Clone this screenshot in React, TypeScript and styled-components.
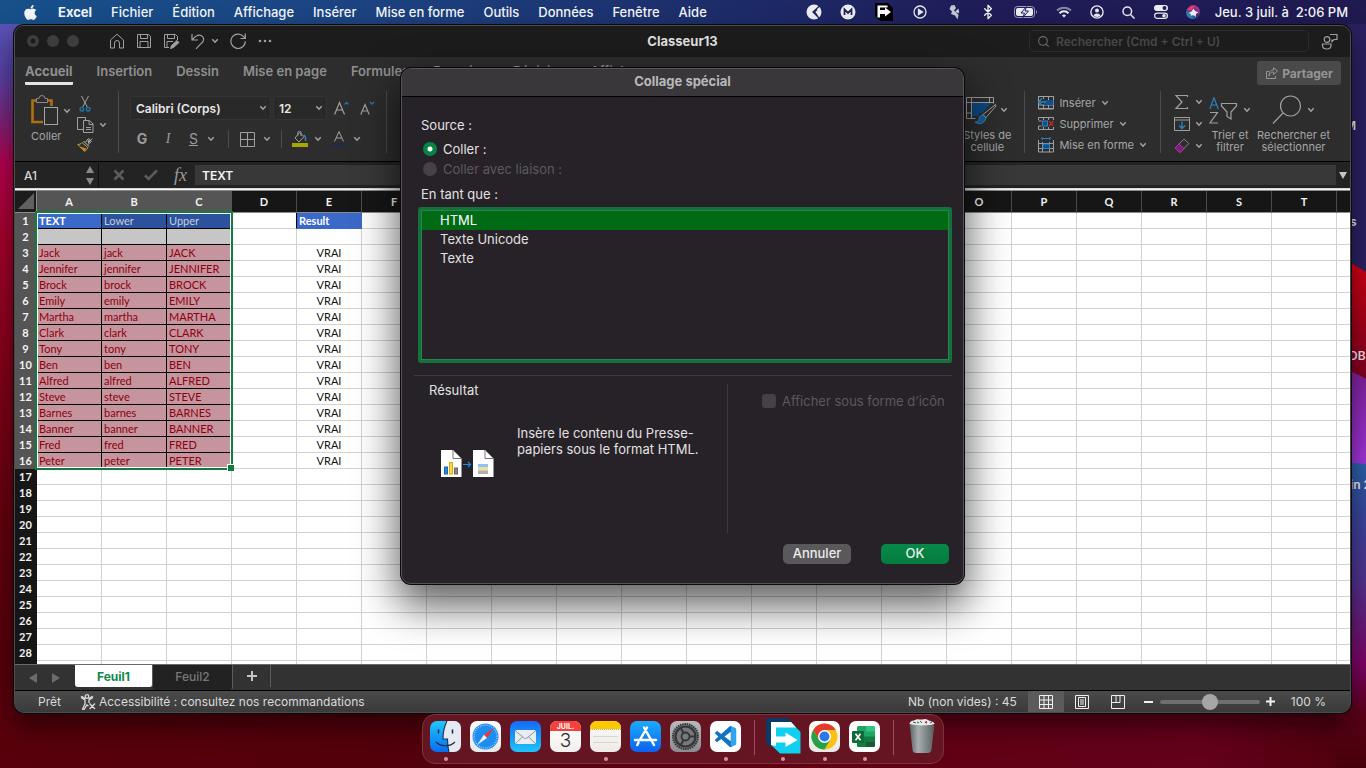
import React, { useState } from "react";
import styled, { createGlobalStyle, css } from "styled-components";
import { Bluetooth, Search } from "lucide-react";
import { FaApple } from "react-icons/fa";

const UI = `Inter, "Liberation Sans", sans-serif`;
const CELL = `Lato, "Liberation Sans", sans-serif`;

const Global = createGlobalStyle`
  * { box-sizing: border-box; }
  body { margin: 0; font-family: ${UI}; font-size: 13px; overflow: hidden; }
  button, input, select { font-family: inherit; font-size: inherit; color: inherit; margin: 0; }
  button { background: none; border: 0; padding: 0; }
  svg { display: block; flex: none; }
`;

/* ---------- desktop ---------- */

const Desktop = styled.div`
  position: relative;
  height: 100vh;
  display: flex;
  flex-direction: column;
  overflow: hidden;
  background:
    linear-gradient(to bottom, #5a52b4 24px, #5443a6 70px, #7a2378 120px, #b4004c 165px, #a3002c 240px, #84001a 360px, #62000e 520px, #56000a 650px, transparent 700px) left / 30px 100% no-repeat,
    linear-gradient(to right, #58000b, #52000b 30%, #600012 60%, #64001a 88%, #4c000c);
`;

const Wallpaper = styled.svg`
  position: absolute;
  top: 0;
  right: 0;
  width: 30px;
  height: 768px;
`;

const DesktopLabel = styled.span<{ $top: number; $inset?: number }>`
  position: absolute;
  top: ${(p) => p.$top}px;
  left: calc(100% - ${(p) => p.$inset ?? 16}px);
  color: #e6e6ee;
  font-size: 12px;
  font-weight: 600;
  line-height: 16px;
  white-space: nowrap;
`;

const MenuBar = styled.header`
  position: relative;
  flex: none;
  height: 24px;
  display: flex;
  align-items: center;
  justify-content: space-between;
  padding: 0 18px 0 22px;
  color: #f4f6fa;
  font-weight: 500;
  background: linear-gradient(to right, #17508a, #1c4482 25%, #1c2f6c 50%, #1f1c58 72%, #1f1a50);
`;

const MenuGroup = styled.nav`
  display: flex;
  align-items: center;
  gap: 19px;
`;

const MenuLink = styled.a<{ $strong?: boolean }>`
  color: inherit;
  text-decoration: none;
  font-weight: ${(p) => (p.$strong ? 700 : 500)};
  line-height: 24px;
`;

const TrayGroup = styled.div<{ $gap: number }>`
  display: flex;
  align-items: center;
  gap: ${(p) => p.$gap}px;
`;

const TrayIcon = styled.span<{ $w: number }>`
  width: ${(p) => p.$w}px;
  display: flex;
  justify-content: center;
`;

const Clock = styled.time`
  white-space: pre;
`;

/* ---------- window ---------- */

const Window = styled.main`
  position: relative;
  flex: 1;
  min-height: 0;
  margin: 1px 15px 0 14px;
  display: flex;
  flex-direction: column;
  overflow: hidden;
  border: 1px solid #4c4c4c;
  border-radius: 10px;
  background: #2d2d2d;
  box-shadow: 0 0 0 1px #0c0a0c, 0 12px 26px rgba(0, 0, 0, 0.5);
  color: #9b9b9b;
`;

const TitleBar = styled.div`
  flex: none;
  height: 31px;
  display: grid;
  grid-template-columns: 1fr auto 1fr;
  align-items: center;
  padding-bottom: 1px;
  background: #1c1c1c;
`;

const TitleSide = styled.div<{ $end?: boolean }>`
  display: flex;
  align-items: center;
  ${(p) =>
    p.$end
      ? css`justify-content: flex-end; gap: 12px; padding-right: 13px;`
      : css`gap: 11px; padding-left: 12px;`}
`;

const Lights = styled.div`
  display: flex;
  gap: 8px;
  margin-right: 19px;
`;

const Light = styled.button<{ $dot?: boolean }>`
  width: 12px;
  height: 12px;
  border-radius: 50%;
  background: ${(p) => (p.$dot ? "radial-gradient(circle, #1c1c1c 2px, #3d3d3d 3px)" : "#3d3d3d")};
`;

const IconButton = styled.button<{ $w?: number }>`
  width: ${(p) => p.$w ?? 16}px;
  display: flex;
  justify-content: center;
  align-items: center;
  color: #9b9b9b;
`;

const DocTitle = styled.h1`
  margin: 0;
  font-size: 13px;
  font-weight: 700;
  color: #dedede;
`;

const SearchBox = styled.label`
  width: 280px;
  height: 22px;
  display: flex;
  align-items: center;
  gap: 6px;
  padding: 0 7px;
  border: 1px solid #2b2b2b;
  border-radius: 5px;
  color: #6c6c6c;
  input {
    flex: 1;
    min-width: 0;
    border: 0;
    outline: 0;
    padding: 0;
    background: none;
    font-size: 12px;
    font-weight: 600;
  }
  input::placeholder { color: #474747; opacity: 1; }
`;

const TabRow = styled.div`
  flex: none;
  height: 30px;
  display: flex;
  justify-content: space-between;
  align-items: flex-start;
  padding: 4px 9px 0 10px;
`;

const Tabs = styled.div`
  display: flex;
  gap: 24px;
`;

const RibbonTab = styled.button<{ $on?: boolean }>`
  height: 24px;
  padding: 0 0 2px;
  border-bottom: 3px solid ${(p) => (p.$on ? "#e4e4e4" : "transparent")};
  border-radius: 1px;
  font-weight: ${(p) => (p.$on ? 700 : 600)};
  color: #8f8f8f;
`;

const ShareButton = styled.button`
  height: 24px;
  width: 84px;
  display: flex;
  align-items: center;
  justify-content: center;
  gap: 4px;
  border-radius: 3px;
  background: #4a4a4a;
  font-size: 12px;
  font-weight: 700;
  color: #959595;
`;

const Ribbon = styled.div`
  flex: none;
  height: 75px;
  display: flex;
  justify-content: space-between;
  padding: 4px 20px 0 16px;
  border-bottom: 1px solid #000;
`;

const Group = styled.div<{ $gap: number }>`
  height: 62px;
  display: flex;
  gap: ${(p) => p.$gap}px;
`;

const Column = styled.div<{ $gap?: number; $top?: number }>`
  display: flex;
  flex-direction: column;
  justify-content: center;
  align-items: flex-start;
  gap: ${(p) => p.$gap ?? 6}px;
  padding-top: ${(p) => p.$top ?? 0}px;
`;

const Row = styled.div<{ $gap?: number }>`
  display: flex;
  align-items: center;
  gap: ${(p) => p.$gap ?? 5}px;
`;

const Separator = styled.span<{ $h?: number }>`
  width: 1px;
  height: ${(p) => p.$h ?? 62}px;
  background: #4b4b4b;
`;

const BigTool = styled.button<{ $start?: boolean }>`
  display: flex;
  flex-direction: column;
  align-items: ${(p) => (p.$start ? "flex-start" : "center")};
  justify-content: flex-start;
  gap: 4px;
  padding-top: 4px;
  font-size: 11px;
  font-weight: 400;
  line-height: 12px;
  white-space: pre-line;
  color: #a6a6a6;
  > div { height: 31px; }
`;

const SmallTool = styled.button`
  height: 16px;
  display: flex;
  align-items: center;
  gap: 5px;
  font-size: 11px;
  font-weight: 400;
  color: #a6a6a6;
`;

const Combo = styled.span<{ $w: number }>`
  width: ${(p) => p.$w}px;
  height: 24px;
  display: flex;
  align-items: center;
  padding-right: 3px;
  border: 1px solid #353535;
  border-radius: 3px;
  background: #292929;
  color: #e6e6e6;
  select {
    flex: 1;
    min-width: 0;
    appearance: none;
    border: 0;
    outline: 0;
    padding: 0 0 0 5px;
    background: none;
    font-size: 12px;
    font-weight: 600;
  }
`;

const Letter = styled.span<{ $italic?: boolean; $line?: boolean; $bold?: boolean; $size?: number }>`
  font-family: ${(p) => (p.$italic ? `"Liberation Serif", serif` : UI)};
  font-size: ${(p) => p.$size ?? 14}px;
  line-height: 16px;
  font-style: ${(p) => (p.$italic ? "italic" : "normal")};
  font-weight: ${(p) => (p.$bold ? 700 : 400)};
  text-decoration: ${(p) => (p.$line ? "underline" : "none")};
`;

/* ---------- formula bar ---------- */

const FormulaBar = styled.div`
  flex: none;
  height: 26px;
  display: flex;
  align-items: center;
  background: #232323;
`;

const NameBox = styled.div`
  width: 84px;
  height: 26px;
  display: flex;
  align-items: center;
  justify-content: space-between;
  padding: 0 4px 0 9px;
  border-right: 1px solid #111;
  input {
    width: 50px;
    border: 0;
    outline: 0;
    padding: 0;
    background: none;
    font-size: 12px;
    font-weight: 500;
    color: #d8d8d8;
  }
`;

const FormulaTools = styled.div`
  width: 96px;
  display: flex;
  align-items: center;
  justify-content: space-between;
  padding: 0 8px 0 12px;
`;

const FormulaInput = styled.input`
  flex: 1;
  min-width: 0;
  height: 20px;
  border: 0;
  outline: 0;
  padding: 0 7px;
  background: #383838;
  font-size: 12px;
  font-weight: 600;
  color: #f5f5f5;
`;

const Expand = styled.button`
  width: 14px;
  display: flex;
  justify-content: center;
`;

const Rule = styled.div`
  flex: none;
  height: 3px;
  background: linear-gradient(to bottom, #d8d8d8 1px, #f4f4f4 1px, #f4f4f4 2px, #8a8a8a 2px);
`;

/* ---------- sheet ---------- */

const Sheet = styled.section`
  position: relative;
  flex: 1;
  min-height: 0;
  overflow: hidden;
  background: #fff;
`;

const Grid = styled.table`
  width: 1387px;
  table-layout: fixed;
  border-collapse: separate;
  border-spacing: 0;
  font-family: ${CELL};
  font-size: 11px;
  color: #111;
`;

const ColHead = styled.th<{ $on: boolean }>`
  height: 22px;
  padding: 0;
  border-right: 1px solid ${(p) => (p.$on ? "#555" : "#4a4a4a")};
  border-bottom: 1px solid #8c8c8c;
  background: ${(p) => (p.$on ? "#555" : "#161616")};
  color: #f2f2f2;
  font-weight: 700;
`;

const Corner = styled.td`
  padding: 0 2px 1px 0;
  border-bottom: 1px solid #8c8c8c;
  border-right: 1px solid #8c8c8c;
  background: #1c1c1c;
  svg { margin-left: auto; }
`;

const RowHead = styled.th<{ $on: boolean }>`
  height: 16px;
  padding: 0 1px 0 0;
  background: ${(p) => (p.$on ? "#555" : "#161616")};
  color: #f2f2f2;
  line-height: 15px;
  font-weight: 700;
  vertical-align: top;
`;

type Kind = "plain" | "active" | "head" | "blank" | "red" | "result" | "true" | "edge";

const kinds: Record<Kind, ReturnType<typeof css>> = {
  plain: css``,
  edge: css`border-right-color: #000;`,
  active: css`background: #3b69ca; color: #fff; font-weight: 700; border-color: #000;`,
  head: css`background: #2c529e; color: #c9cdd6; border-color: #000;`,
  blank: css`background: #c6c6c6; border-color: #000;`,
  red: css`background: #c6949c; color: #8e0010; border-color: #000;`,
  result: css`background: #3b69ca; color: #fff; font-weight: 700; border-color: #3b69ca;`,
  true: css`text-align: center;`,
};

const Cell = styled.td<{ $kind: Kind }>`
  height: 16px;
  padding: 0 2px;
  border: 0 solid #d2d2d2;
  border-width: 0 1px 1px 0;
  line-height: 15px;
  white-space: nowrap;
  ${(p) => kinds[p.$kind]}
`;

const Selection = styled.div`
  position: absolute;
  top: 20px;
  left: 20px;
  width: 198px;
  height: 259px;
  border: 2px solid #107c41;
  box-shadow: inset 0 0 0 1px #fff;
  pointer-events: none;
  &::after {
    content: "";
    position: absolute;
    right: -3px;
    bottom: -3px;
    width: 6px;
    height: 6px;
    background: #107c41;
    border: 0 solid #fff;
    border-width: 1px 0 0 1px;
  }
`;

const SheetTabs = styled.div`
  flex: none;
  height: 27px;
  display: flex;
  align-items: flex-start;
  border-top: 1px solid #6a6a6a;
  border-bottom: 1px solid #000;
  background: #323232;
`;

const TabArrows = styled.div`
  width: 60px;
  height: 26px;
  display: flex;
  align-items: center;
  gap: 15px;
  padding-left: 14px;
`;

const SheetTab = styled.button<{ $on?: boolean }>`
  width: ${(p) => (p.$on ? 78 : 80)}px;
  height: ${(p) => (p.$on ? 22 : 25)}px;
  padding-bottom: ${(p) => (p.$on ? 0 : 3)}px;
  border-right: 1px solid #5c5c5c;
  border-radius: 0 0 3px 3px;
  background: ${(p) => (p.$on ? "#fff" : "#222")};
  color: ${(p) => (p.$on ? "#0e8a4a" : "#777")};
  font-size: 12px;
  font-weight: ${(p) => (p.$on ? 700 : 500)};
`;

const AddTab = styled.button`
  width: 38px;
  height: 22px;
  display: flex;
  justify-content: center;
  align-items: center;
  border-right: 1px solid #5c5c5c;
`;

const StatusBar = styled.footer`
  flex: none;
  height: 21px;
  display: flex;
  justify-content: space-between;
  align-items: center;
  padding: 0 24px 0 23px;
  background: linear-gradient(#4a4a4a, #3a3a3a);
  color: #dadada;
  font-size: 12px;
`;

const StatusSide = styled.div<{ $gap?: number }>`
  display: flex;
  align-items: center;
  gap: ${(p) => p.$gap ?? 0}px;
`;

const ViewButton = styled.button<{ $on?: boolean }>`
  width: 36px;
  height: 21px;
  display: flex;
  align-items: center;
  justify-content: center;
  background: ${(p) => (p.$on ? "#5b5b5b" : "none")};
`;

const ZoomSlider = styled.input`
  width: 100px;
  height: 16px;
  appearance: none;
  background: none;
  &::-webkit-slider-runnable-track { height: 4px; border-radius: 2px; background: #6f6f6f; }
  &::-webkit-slider-thumb {
    appearance: none;
    width: 16px;
    height: 16px;
    margin-top: -6px;
    border-radius: 50%;
    background: #a6a6a6;
  }
`;

/* ---------- dialog ---------- */

const Dialog = styled.section`
  position: absolute;
  top: 68px;
  left: 50%;
  width: 563px;
  margin-left: -282px;
  overflow: hidden;
  border: 1px solid #57535a;
  border-radius: 10px;
  background: #272228;
  color: #e2e1e2;
  box-shadow: 0 0 0 1px #0a090a, 0 18px 40px 4px rgba(0, 0, 0, 0.62);
`;

const DialogTitle = styled.h2`
  margin: 0;
  height: 28px;
  border-bottom: 1px solid #000;
  background: #3a373b;
  color: #b9b7ba;
  font-size: 13px;
  font-weight: 700;
  line-height: 25px;
  text-align: center;
`;

const DialogBody = styled.div`
  padding: 20px 11px 19px 12px;
  line-height: 16px;
`;

const FieldLabel = styled.div`
  margin: 0 7px;
  line-height: 16px;
`;

const Choices = styled.div`
  margin: 6px 9px 7px;
`;

const Choice = styled.label<{ $off?: boolean }>`
  height: 20px;
  display: flex;
  align-items: center;
  gap: 6px;
  color: ${(p) => (p.$off ? "#5c585d" : "inherit")};
  white-space: nowrap;
  input {
    appearance: none;
    flex: none;
    width: 14px;
    height: 14px;
    background: #454146;
  }
  input[type="radio"] { border-radius: 50%; }
  input[type="checkbox"] { border-radius: 3px; }
  input:checked { background: radial-gradient(circle, #fff 2px, #068445 3px); }
`;

const ListBox = styled.ul`
  height: 156px;
  margin: 5px 0 12px 4px;
  padding: 0;
  list-style: none;
  border: 3px solid #15713c;
  outline: 1px solid #24854d;
  outline-offset: -4px;
  border-radius: 3px;
`;

const ListItem = styled.li<{ $on: boolean }>`
  height: ${(p) => (p.$on ? 20 : 19)}px;
  margin: 0 1px;
  padding-left: 18px;
  line-height: ${(p) => (p.$on ? 20 : 19)}px;
  background: ${(p) => (p.$on ? "#006b14" : "none")};
  color: ${(p) => (p.$on ? "#fff" : "inherit")};
`;

const Result = styled.div`
  display: grid;
  grid-template-columns: 314px 1fr;
  border-top: 1px solid #3d393e;
  padding-top: 6px;
`;

const ResultInfo = styled.div`
  height: 151px;
  padding-left: 15px;
  background: linear-gradient(#3d393e, #3d393e) right bottom / 1px 149px no-repeat;
`;

const Preview = styled.div`
  display: flex;
  align-items: flex-start;
  gap: 23px;
  padding: 27px 0 0 12px;
  svg { margin-top: 25px; }
`;

const Description = styled.p`
  width: 184px;
  margin: 0;
`;

const IconOption = styled.div`
  padding: 9px 0 0 34px;
`;

const Actions = styled.div`
  display: flex;
  justify-content: flex-end;
  gap: 30px;
  padding: 11px 3px 0 0;
`;

const ActionButton = styled.button<{ $primary?: boolean }>`
  width: 68px;
  height: 20px;
  padding-bottom: 2px;
  border-radius: 5px;
  background: ${(p) => (p.$primary ? "linear-gradient(#068a49, #057a3f)" : "#5b585c")};
  color: #ececec;
  font-weight: 500;
`;

/* ---------- dock ---------- */

const DockWrap = styled.footer`
  position: relative;
  flex: none;
  display: flex;
  justify-content: center;
  padding: 1px 0 4px;
`;

const Dock = styled.div`
  height: 50px;
  display: flex;
  align-items: flex-end;
  gap: 9px;
  padding: 0 7px 2px;
  border: 1px solid #7c3341;
  border-radius: 13px;
  background: #641521;
`;

const DockApp = styled.button<{ $running?: boolean; $w?: number }>`
  width: ${(p) => p.$w ?? 31}px;
  display: flex;
  flex-direction: column;
  align-items: center;
  gap: ${(p) => (p.$w ? 3 : 5)}px;
  &::after {
    content: "";
    width: 4px;
    height: 4px;
    border-radius: 50%;
    background: ${(p) => (p.$running ? "#e08f9b" : "transparent")};
  }
`;

const DockLine = styled.span<{ $after: number }>`
  width: 1px;
  height: 35px;
  margin: 0 ${(p) => p.$after}px 6px 4px;
  background: #9a4c58;
`;

/* ---------- icons ---------- */

const Chevron = () => (
  <svg width="8" height="6" viewBox="0 0 8 6" fill="none" stroke="#a2a2a2" strokeWidth="1.5">
    <path d="M1.3 1.3 4 4.2 6.7 1.3" />
  </svg>
);

const Ic = ({ w = 16, h = 16, children, sw = 1 }: { w?: number; h?: number; sw?: number; children: React.ReactNode }) => (
  <svg width={w} height={h} viewBox={`0 0 ${w} ${h}`} fill="none" stroke="#a0a0a0" strokeWidth={sw}>
    {children}
  </svg>
);

const Triangle = ({ dir, w = 8, h = 8, fill = "#8a8a8a" }: { dir: "up" | "down" | "left" | "right"; w?: number; h?: number; fill?: string }) => {
  const pts = {
    up: `0,${h} ${w / 2},0 ${w},${h}`,
    down: `0,0 ${w},0 ${w / 2},${h}`,
    left: `${w},0 ${w},${h} 0,${h / 2}`,
    right: `0,0 ${w},${h / 2} 0,${h}`,
  }[dir];
  return (
    <svg width={w} height={h}>
      <polygon points={pts} fill={fill} />
    </svg>
  );
};

const HomeIcon = () => (
  <Ic><path d="M1.5 7 8 1.2 14.5 7V15H10.5V10a2.5 2.5 0 0 0-5 0V15H1.5Z" /></Ic>
);
const SaveIcon = () => (
  <Ic><path d="M1.5 1.5h11l2 2v11h-13ZM4.5 1.5v4h7v-4M4 14.5v-6h8v6" /></Ic>
);
const SaveAsIcon = () => (
  <Ic w={17}>
    <path d="M6 14.5H1.5v-13h11l2 2V7M4.5 1.5v4h7v-4M4 14.5v-6h6" />
    <path d="M14 7.5 8.5 12.5 7.5 15.5 10.5 14.5 16 9.5Z" fill="#a0a0a0" />
  </Ic>
);
const UndoIcon = () => (
  <Ic sw={1.2}><path d="M2 1v6h6M2.3 6.8C5 3.5 8.500 1 11.500 2.800c3.200 2 2.400 5.200 0 7.400L6 15.800" /></Ic>
);
const RedoIcon = () => (
  <Ic sw={1.2}><path d="M15.300 0.500v5H10.500M15.300 8.300a7.200 7.200 0 1 1-1.700-4.700l1.600 1.900" /></Ic>
);
const DotsIcon = () => (
  <svg width="14" height="4"><g fill="#a0a0a0"><circle cx="2" cy="2" r="1.300" /><circle cx="7" cy="2" r="1.300" /><circle cx="12" cy="2" r="1.300" /></g></svg>
);
const PeopleIcon = () => (
  <Ic w={17} h={17} sw={1.2}>
    <circle cx="6" cy="6.500" r="2.800" />
    <path d="M1.500 11h8.500v1.500c0 2.200-1.900 3.500-4.200 3.500s-4.300-1.300-4.300-3.500ZM9 1.500h7v5h-3l-2 2v-2" />
  </Ic>
);
const ShareIcon = () => (
  <svg width="13" height="13" viewBox="0 0 13 13" fill="none" stroke="#959595">
    <path d="M4 4.500H1.500v7h9V9M4 9c.3-2.600 2-4 4.500-4V7.500L12.500 4 8.500.800V3C5.500 3 4 5.500 4 9Z" />
  </svg>
);
const PasteIcon = () => (
  <svg width="28" height="31" viewBox="0 0 28 31" fill="none">
    <path d="M6 5.500H1.500v21.500H12M16 5.500h4.500V11" stroke="#b06f12" strokeWidth="2.600" />
    <path d="M5.500 7.500v-4H8a3 3 0 0 1 6 0h2.500v4Z" fill="#2d2d2d" stroke="#8a8a8a" />
    <rect x="13.500" y="12.500" width="13" height="17" fill="#2d2d2d" stroke="#a5a5a5" />
  </svg>
);
const CutIcon = () => (
  <Ic w={12} h={16}>
    <path d="M2.500 0 8.500 11.500M9.500 0 3.500 11.500" />
    <g stroke="#1f74a8" strokeWidth="1.400"><circle cx="2.800" cy="13.200" r="1.800" /><circle cx="9.200" cy="13.200" r="1.800" /></g>
  </Ic>
);
const CopyIcon = () => (
  <Ic w={17} h={17}>
    <path d="M6 13.500H.500V1.500h8V4M6.500 4.500h6l3.500 3.500v8.500H6.500ZM12 4.500V8.500h4M9 11.500h5M9 13.500h5" />
  </Ic>
);
const BrushIcon = () => (
  <Ic w={16} h={15}>
    <path d="M15.200 1.500 11 6M6.500 4l5.500 5.500M8.500 5.200l3-3.700 1 .8-1.500 2.500 2.500-1.300.8 1-3.500 3.200" stroke="#b8b8b8" />
    <path d="M5 5.500C4 6.800 2.500 7.500.8 7.500L7.500 14.300C9 13.500 10.500 12 10.800 10.500Z" stroke="#c8a050" />
    <path d="M3 9.500 7.500 14l2-2.500Z" fill="#d08818" stroke="none" />
  </Ic>
);
const BordersIcon = () => <Ic><path d="M.5 1.500h14v14H.5ZM7.500 1.500v14M.5 8.500h14" /></Ic>;
const BucketIcon = () => (
  <Ic w={16} h={16}>
    <path d="M7.500 1.500 3 7l4 4 5-5.500ZM6 4.500V1.500a1.500 1.500 0 0 1 3 0V5" />
    <path d="M12 4c1.500 1 1.800 3 1.500 6" stroke="#3c86b4" strokeWidth="1.500" />
    <rect x="0" y="12" width="16" height="4" fill="#a5a800" stroke="none" />
  </Ic>
);
const FontColorIcon = () => (
  <Ic w={16} h={16}>
    <path d="M3.500 10.500 8 .5l4.500 10M5 7h6" />
    <rect x="0" y="12" width="16" height="4" fill="#222c40" stroke="none" />
  </Ic>
);
const GrowIcon = ({ down }: { down?: boolean }) => (
  <Ic w={15} h={14} sw={1.2}>
    {down ? <path d="M.8 13.500 5 3.500l4.200 10M2.500 10h5" /> : <path d="M.6 13.500 5.500 1.500l5 12M2.500 9h6" />}
    <path d={down ? "M10 1l2 2 2-2" : "M10.500 3.500l2-2 2 2"} stroke="#1f74a8" strokeWidth="1.400" />
  </Ic>
);
const StylesIcon = () => (
  <svg width="31" height="29" viewBox="0 0 31 29" fill="none" stroke="#a0a0a0">
    <path d="M.5 1.500h27v6M.5 1.500v21h9M.5 6.500h27M5.500 1.500v21M23.500 1.500v5M.5 17h5" />
    <path d="M6 7h19L16 17l-3 0v3H6Z" fill="#0d4a86" stroke="none" />
    <path d="M29.500 8.500 17 18.500l3 3L30 10Z" fill="#2d2d2d" />
    <path d="M17 19c-3 0-4 3-4 5-1 2-3 2-4 2 4 3 9 2 11-4Z" fill="#14609c" stroke="#3b8cc4" />
  </svg>
);
const InsertIcon = () => (
  <Ic h={15}>
    <path d="M.5 1v13h15V1M5.500 1v3M10.500 1v13M.5 1.500h15M.5 13.500h15M5.500 10v4M.5 10h15" />
    <rect x="6" y="5" width="9.500" height="5" fill="#0d4f91" stroke="none" />
    <path d="M8 7H.5M4 3.500.5 7 4 10" stroke="#2b83bd" strokeWidth="1.300" />
  </Ic>
);
const DeleteIcon = () => (
  <Ic h={15}>
    <path d="M.5 4V1.500h15V4M5.500 1v3M10.500 1v3M.5 5h3M.5 10h3M.5 10v3.500h15V11M5.500 11v3M10.500 11v3" />
    <rect x="4.500" y="5" width="5" height="5" fill="#0d4f91" stroke="#2b83bd" />
    <path d="M11 5l4.500 5M15.500 5 11 10" stroke="#b52a2a" strokeWidth="1.400" />
  </Ic>
);
const FormatIcon = () => (
  <Ic h={16}>
    <path d="M.5 3v12h15V3M.5 6.500h15M.5 11.500h15M4.500 5v10M11.500 5v10" />
    <rect x="5" y="7" width="6.500" height="4.500" fill="#0d4f91" stroke="#2b83bd" />
    <path d="M4 1.500h8M4 0v3M12 0v3" stroke="#2b83bd" />
  </Ic>
);
const SigmaIcon = () => <Ic sw={1.2}><path d="M13.500 3V1.500H2L8 8l-6 6.500h11.500V13" /></Ic>;
const FillIcon = () => (
  <Ic>
    <path d="M.5 1.500h15v13H.5ZM.5 4h15" />
    <path d="M8 5.500v7M5 9.500l3 3 3-3" stroke="#2b83bd" strokeWidth="1.400" />
  </Ic>
);
const EraserIcon = () => (
  <Ic>
    <path d="M10 1 14.800 5.500 6 14.500 1 10Z" stroke="#a070a0" />
    <path d="M5 6 10 10.500 6 14.500 1 10Z" fill="#7c1b7a" stroke="#a03a9c" />
  </Ic>
);
const SortIcon = () => (
  <svg width="29" height="27" viewBox="0 0 29 27" fill="none" strokeWidth="1.200">
    <path d="M.8 12 5 .8 9.200 12M2.500 8h5" stroke="#2b83bd" />
    <path d="M1 15.500h7.500L1 26h8M12.500 6.500h15v2.500L22 15v7l-4-2.500V15L12.500 9Z" stroke="#a0a0a0" />
  </svg>
);
const FindIcon = () => (
  <Ic w={30} h={30} sw={1.2}><circle cx="18.500" cy="11" r="10" /><path d="M11 18 1 28.500" /></Ic>
);
const AccessIcon = () => (
  <Ic sw={1.3}>
    <g stroke="#dcdcdc"><circle cx="7" cy="2.500" r="1.800" /><path d="M1 3.500 5 6v4l-2.500 5 1.500.5L7 11l1.500 1M13 3.500 9 6v3M1 3.500l1-1L5.500 5M13 3.500l-1-1L8.500 5M9.500 9.500l5.500 5.500M15 9.500 9.500 15" /></g>
  </Ic>
);

const Sq = ({ id, children, from = "#fff", to = "#e8e8e8" }: { id: string; children?: React.ReactNode; from?: string; to?: string }) => (
  <svg width="31" height="31" viewBox="0 0 31 31">
    <defs>
      <linearGradient id={id} x1="0" y1="0" x2="0" y2="1"><stop stopColor={from} /><stop offset="1" stopColor={to} /></linearGradient>
      <clipPath id={id + "c"}><rect width="31" height="31" rx="7" /></clipPath>
    </defs>
    <g clipPath={`url(#${id}c)`}>
      <rect width="31" height="31" fill={`url(#${id})`} />
      {children}
    </g>
  </svg>
);

const Finder = () => (
  <Sq id="finder" from="#1fc8fb" to="#0a6cf0">
    <path d="M17 0c-2.500 5-4 10-4 18h4.500c0 5 .5 9 1.500 13H31V0Z" fill="#e6e9f1" />
    <path d="M8.500 9v3M22.500 9v3" stroke="#14304f" strokeWidth="1.600" strokeLinecap="round" />
    <path d="M6 21c5 5 14 5 19 0M17 0c-2.500 5-4 10-4 18h4.500c0 5 .5 9 1.500 13" fill="none" stroke="#14304f" strokeWidth="1.100" />
  </Sq>
);
const Safari = () => (
  <Sq id="safari">
    <circle cx="15.500" cy="15.500" r="13" fill="#1e8df2" />
    <circle cx="15.500" cy="15.500" r="11.500" fill="none" stroke="#cfe6fb" strokeWidth="1.600" strokeDasharray=".6 1.400" />
    <path d="M24 7 14 13.800 17 17Z" fill="#f5342c" /><path d="M7 24 17 17 14 13.800Z" fill="#f4f4f4" />
  </Sq>
);
const Mail = () => (
  <Sq id="mail" from="#1669f5" to="#1ec4fb">
    <rect x="5" y="9" width="21" height="14" rx="2" fill="#e9edf1" />
    <path d="M5.500 10 14 17q1.500 1 3 0l8.500-7M5.500 22.500 12.500 16M25.500 22.500 18.500 16" fill="none" stroke="#8d979f" />
  </Sq>
);
const Calendar = () => (
  <Sq id="cal" from="#fff" to="#f2f0ee">
    <rect width="31" height="10" fill="#f5403b" />
    <text x="15.500" y="8" textAnchor="middle" fontSize="7" fontWeight="700" fill="#fff" fontFamily="Inter">JUIL.</text>
    <text x="15.500" y="26" textAnchor="middle" fontSize="19" fontWeight="300" fill="#2b2b2b" fontFamily="Inter">3</text>
  </Sq>
);
const Notes = () => (
  <Sq id="notes" from="#fbfaf8" to="#eeebe7">
    <rect width="31" height="8" fill="#fbc900" />
    <path d="M0 8.500h31" stroke="#b59a3a" strokeDasharray="1 1" strokeWidth=".8" />
    <path d="M3 15.500h25M3 21.500h25" stroke="#d9d6d2" />
  </Sq>
);
const Store = () => (
  <Sq id="store" from="#1cacfb" to="#0b61f0">
    <path d="M17 6.500 9.800 19M14 6.500 22 20.500M5 19h14M22 19h4M8.500 21.500 7.300 24M22.600 21.500 24 24" stroke="#fff" strokeWidth="2.500" strokeLinecap="round" fill="none" />
  </Sq>
);
const Settings = () => (
  <Sq id="set" from="#b8b9bb" to="#8b8c8f">
    <circle cx="15.500" cy="15.500" r="12.500" fill="#77797c" />
    <g fill="none" stroke="#343537">
      <circle cx="15.500" cy="15.500" r="12.500" strokeWidth="2" strokeDasharray="1.500 .8" />
      <circle cx="15.500" cy="15.500" r="10" strokeWidth="2.200" />
      <circle cx="15.500" cy="15.500" r="4" strokeWidth="1.800" />
      <path d="M19.500 15.500h6M13.500 12l-3-5.500M13.500 19l-3 5.500" strokeWidth="2" />
    </g>
  </Sq>
);
const Code = () => (
  <Sq id="code" from="#fff" to="#fff">
    <g transform="translate(5 5) scale(.88)">
      <path fill="#1272c4" d="M23.150 2.587 18.210.210a1.494 1.494 0 0 0-1.705.290l-9.460 8.630-4.120-3.128a1 1 0 0 0-1.276.057L.327 7.261A1 1 0 0 0 .326 8.740L3.899 12 .326 15.260a1 1 0 0 0 .001 1.479L1.650 17.940a1 1 0 0 0 1.276.057l4.120-3.128 9.460 8.630a1.492 1.492 0 0 0 1.704.290l4.942-2.377A1.500 1.500 0 0 0 24 20.060V3.939a1.500 1.500 0 0 0-.850-1.352zm-5.146 14.861L10.826 12l7.178-5.448v10.896z" />
      <path fill="#2fa4f0" d="M18.210.210 23.150 2.587A1.500 1.500 0 0 1 24 3.939V20.060a1.500 1.500 0 0 1-.850 1.352l-4.940 2.377c-.3.100-.2-.400-.2-.8V1c0-.5 0-.900.2-.790Z" />
    </g>
  </Sq>
);
const Transfer = () => (
  <svg width="35" height="36" viewBox="0 0 35 36">
    <path d="M0 0h22l6 6H5v24L0 24Z" fill="#0c3a63" />
    <path d="M5 4h20l9.500 10v21.500H14L5 27Z" fill="#0fd0ef" />
    <path d="M5 4h20l5 5.500H10v18.500L5 27Z" fill="#fff" />
    <path d="M10 18.500h9.500V14.500l12 7.500-12 7v-4.500H10Z" fill="#fff" />
  </svg>
);
const Chrome = () => (
  <Sq id="chrome">
    <g transform="translate(15.500 15.500)">
      <circle r="13" fill="#fbc116" />
      <path d="M-11.260-6.500A13 13 0 0 1 11.260-6.500H0L-5.630 3.250Z" fill="#e33b2e" />
      <path d="M-11.260-6.500A13 13 0 0 0 0 13L5.630 3.250-5.630 3.250Z" fill="#25a04b" />
      <circle r="6.500" fill="#fff" /><circle r="5" fill="#2a78ea" />
    </g>
  </Sq>
);
const Excel = () => (
  <Sq id="excel" from="#fff" to="#fff">
    <rect x="8" y="5" width="18" height="21" rx="1.500" fill="#1fa463" />
    <path d="M17 5h7.500A1.500 1.500 0 0 1 26 6.500V10.500h-9Z" fill="#33c481" />
    <path d="M8 15.500h9v10.500H9.500A1.500 1.500 0 0 1 8 24.500ZM17 15.500h9V20.500h-9Z" fill="#107c41" />
    <path d="M17 20.500h9v4a1.500 1.500 0 0 1-1.500 1.500H17Z" fill="#185c37" />
    <rect x="3" y="10" width="12" height="12" rx="1" fill="#0f6b38" />
    <path d="M6.500 12.800 11.500 19.200M11.500 12.800 6.500 19.200" stroke="#fff" strokeWidth="1.600" />
  </Sq>
);
const Trash = () => (
  <svg width="28" height="36" viewBox="0 0 28 36">
    <defs><linearGradient id="bin"><stop stopColor="#5b6163" /><stop offset=".35" stopColor="#a8aeb0" /><stop offset=".7" stopColor="#7d8486" /><stop offset="1" stopColor="#565c5e" /></linearGradient></defs>
    <path d="M1.500 5h25L23.500 32q-.3 3-4 3h-11q-3.700 0-4-3Z" fill="url(#bin)" />
    <path d="M1.500 5.500C3 2 6 3 8 1.500c2-1 4 .5 6 0s4-1 6 .5 5 1 6.500 3.500c-2 2.500-23 2.500-25 0Z" fill="#e9e9ec" />
    <path d="m5 4 3 1M12 3l2 2M19 3l-2 2M22 5l2-1" stroke="#555" /><path d="m9 4 2 1" stroke="#2bb36b" strokeWidth="1.500" /><path d="m17 4 2 1" stroke="#c2453b" strokeWidth="1.500" />
  </svg>
);

/* ---------- data ---------- */

const names = ["Jack", "Jennifer", "Brock", "Emily", "Martha", "Clark", "Tony", "Ben", "Alfred", "Steve", "Barnes", "Banner", "Fred", "Peter"];
const columns = "ABCDEFGHIJKLMNOPQRSTU".split("");
const rows = Array.from({ length: 29 }, (_, i) => i + 1);
const menus = ["Fichier", "Édition", "Affichage", "Insérer", "Mise en forme", "Outils", "Données", "Fenêtre", "Aide"];
const ribbonTabs = ["Accueil", "Insertion", "Dessin", "Mise en page", "Formules", "Données", "Révision", "Affichage"];
const formats = ["HTML", "Texte Unicode", "Texte"];

function cellOf(row: number, col: string): { kind: Kind; text?: string } {
  const c = "ABC".indexOf(col);
  if (row === 1) {
    if (col === "A") return { kind: "active", text: "TEXT" };
    if (c > 0) return { kind: "head", text: c === 1 ? "Lower" : "Upper" };
    if (col === "D") return { kind: "edge" };
    if (col === "E") return { kind: "result", text: "Result" };
  }
  if (row === 2 && c >= 0) return { kind: "blank" };
  const name = names[row - 3];
  if (name && c >= 0) return { kind: "red", text: [name, name.toLowerCase(), name.toUpperCase()][c] };
  if (name && col === "E") return { kind: "true", text: "VRAI" };
  return { kind: "plain" };
}

const RowHeadCol = styled.col`
  width: 22px;
`;
const DataCol = styled.col`
  width: 65px;
`;

const SheetGrid = () => (
  <Sheet>
    <Grid>
      <colgroup>
        <RowHeadCol />
        {columns.map((c) => <DataCol key={c} />)}
      </colgroup>
      <thead>
        <tr>
          <Corner><svg width="16" height="16"><path d="M16 0V16H0Z" fill="#606060" /></svg></Corner>
          {columns.map((c) => <ColHead key={c} scope="col" $on={"ABC".includes(c)}>{c}</ColHead>)}
        </tr>
      </thead>
      <tbody>
        {rows.map((r) => (
          <tr key={r}>
            <RowHead scope="row" $on={r <= 16}>{r}</RowHead>
            {columns.map((c) => {
              const { kind, text } = cellOf(r, c);
              return <Cell key={c} $kind={kind}>{text}</Cell>;
            })}
          </tr>
        ))}
      </tbody>
    </Grid>
    <Selection />
  </Sheet>
);

const PasteDialog = () => {
  const [format, setFormat] = useState("HTML");
  return (
    <Dialog role="dialog" aria-labelledby="dialog-title">
      <DialogTitle id="dialog-title">Collage spécial</DialogTitle>
      <DialogBody>
        <FieldLabel>Source :</FieldLabel>
        <Choices role="radiogroup" aria-label="Source">
          <Choice><input type="radio" name="source" defaultChecked />Coller :</Choice>
          <Choice $off><input type="radio" name="source" disabled />Coller avec liaison :</Choice>
        </Choices>
        <FieldLabel id="format-label">En tant que :</FieldLabel>
        <ListBox role="listbox" aria-labelledby="format-label" tabIndex={0}>
          {formats.map((f) => (
            <ListItem key={f} role="option" aria-selected={f === format} $on={f === format} onClick={() => setFormat(f)}>{f}</ListItem>
          ))}
        </ListBox>
        <Result>
          <ResultInfo>
            Résultat
            <Preview>
              <svg width="53" height="27" viewBox="0 0 53 27">
                <path d="M0 0h12l8.500 8.500V27H0ZM32 0h12l8.500 8.500V27H32Z" fill="#fff" />
                <path d="M12 0v8.500h8.500M44 0v8.500h8.500" fill="none" stroke="#777" />
                <rect x="3.500" y="17" width="3" height="7" fill="#2488e8" stroke="#0f66b8" />
                <rect x="8.500" y="12.500" width="3" height="11.500" fill="#ffd54a" stroke="#e0a800" />
                <rect x="13.500" y="18" width="3" height="6" fill="#8a8a8a" stroke="#666" />
                <path d="M22 14.500h7M27 12l2.500 2.500L27 17" fill="none" stroke="#1a8cf0" strokeWidth="1.200" />
                <rect x="37" y="14" width="10" height="3.500" fill="#8fc1f2" /><rect x="37" y="17.500" width="10" height="3" fill="#f8dd8c" /><rect x="37" y="20.500" width="10" height="3.500" fill="#b0b0b0" />
              </svg>
              <Description>Insère le contenu du Presse-papiers sous le format HTML.</Description>
            </Preview>
          </ResultInfo>
          <IconOption>
            <Choice $off><input type="checkbox" disabled />Afficher sous forme d’icôn</Choice>
          </IconOption>
        </Result>
        <Actions>
          <ActionButton>Annuler</ActionButton>
          <ActionButton $primary>OK</ActionButton>
        </Actions>
      </DialogBody>
    </Dialog>
  );
};

export default function App() {
  return (
    <>
      <Global />
      <Desktop>
        <Wallpaper viewBox="0 0 30 768" preserveAspectRatio="none" aria-hidden="true">
          <defs>
            <linearGradient id="wr" x1="0" y1="0" x2="0" y2="1"><stop stopColor="#d40010" /><stop offset="1" stopColor="#6e0024" /></linearGradient>
            <linearGradient id="wp" x1="0" y1="0" x2="0" y2="1"><stop stopColor="#7a2196" /><stop offset="1" stopColor="#a636e6" /></linearGradient>
            <linearGradient id="wb" x1="0" y1="0" x2="0" y2="1">
              <stop stopColor="#2a62a6" /><stop offset=".15" stopColor="#34489c" /><stop offset=".4" stopColor="#52308c" /><stop offset=".66" stopColor="#7c0466" /><stop offset=".82" stopColor="#5c0018" /><stop offset="1" stopColor="#460008" />
            </linearGradient>
          </defs>
          <rect width="30" height="300" fill="#2a2060" />
          <path d="M0 255Q18 264 30 272V400H0Z" fill="url(#wr)" />
          <path d="M0 368Q18 371 30 379V480H0Z" fill="url(#wp)" />
          <path d="M0 461 30 464V768H0Z" fill="url(#wb)" />
        </Wallpaper>
        <DesktopLabel $top={118} $inset={21}>M</DesktopLabel>
        <DesktopLabel $top={214}>s</DesktopLabel>
        <DesktopLabel $top={348} $inset={17}>DB</DesktopLabel>
        <DesktopLabel $top={477}>in 2</DesktopLabel>

        <MenuBar>
          <MenuGroup>
            <FaApple size={17} />
            <MenuLink href="#" $strong>Excel</MenuLink>
            {menus.map((m) => <MenuLink key={m} href="#">{m}</MenuLink>)}
          </MenuGroup>
          <TrayGroup $gap={15}>
            <TrayGroup $gap={18}>
              <TrayIcon $w={16}><svg width="16" height="16"><circle cx="8" cy="8" r="7.500" fill="#eceef4" /><path d="M13.500 2 7 8l6 6M11 5.500 8.500 8l3 4" fill="none" stroke="#20245c" strokeWidth="1.300" /></svg></TrayIcon>
              <TrayIcon $w={16}><svg width="16" height="16"><circle cx="8" cy="8" r="7.500" fill="#eceef4" /><path d="M4.500 11V5.500L8 9l3.500-3.500V11" fill="none" stroke="#20245c" strokeWidth="1.800" /></svg></TrayIcon>
              <TrayIcon $w={20}><svg width="18" height="18"><path d="M0 0h13l5 5v13H5l-5-5Z" fill="#000" /><path d="M2.500 2.500h10v2H5V7h5V4.500L16 9l-6 4.500V11H5v3.500H2.500Z" fill="#fff" /></svg></TrayIcon>
              <TrayIcon $w={16}><svg width="14" height="14" fill="none" stroke="#e8eaf2" strokeWidth="1.300"><circle cx="7" cy="7" r="6" /><path d="M5.500 4.500v5l4-2.500Z" fill="#e8eaf2" /></svg></TrayIcon>
              <TrayIcon $w={16}><svg width="12" height="16"><path d="M1.500 5 3 1.500 6.500 1 8 4 6 6.500 8 8l2.500 3-1 4.500-2.500-4-4-1.500L4 7.500Z" fill="#c3c6d3" /><path d="m7.500 7.500 3-3 .5 5Z" fill="#dfe1ea" /></svg></TrayIcon>
              <TrayIcon $w={16}><Bluetooth size={16} strokeWidth={2} /></TrayIcon>
              <TrayIcon $w={24}><svg width="24" height="12"><rect x=".5" y=".5" width="20" height="11" rx="3" fill="none" stroke="#9d9fc0" /><rect x="2" y="2" width="17" height="8" rx="2" fill="#eceef4" /><path d="M22 4v4q2-2 0-4Z" fill="#9d9fc0" /><path d="M12.500.5 7 7h3.500L9 11.500 14.500 5H11Z" fill="#eceef4" stroke="#1f1c58" /></svg></TrayIcon>
              <TrayIcon $w={16}><svg width="16" height="12" fill="none" strokeWidth="2"><path d="M1 4.500a10 10 0 0 1 14 0" stroke="#8486ac" /><path d="M3.500 7.200a6.300 6.300 0 0 1 9 0" stroke="#eceef4" /><path d="M8 11.500 6 9.500a3 3 0 0 1 4 0Z" fill="#eceef4" stroke="none" /></svg></TrayIcon>
              <TrayIcon $w={14}><svg width="14" height="14" fill="none" stroke="#e8eaf2" strokeWidth="1.400"><circle cx="7" cy="7" r="6.100" /><circle cx="7" cy="5.500" r="2" fill="#e8eaf2" stroke="none" /><path d="M3.500 10.800c1-3 6-3 7 0-1 1.500-6 1.500-7 0Z" fill="#e8eaf2" stroke="none" /></svg></TrayIcon>
              <TrayIcon $w={14}><svg width="13" height="13" fill="none" stroke="#e8eaf2" strokeWidth="1.500"><circle cx="5.300" cy="5.300" r="4.300" /><path d="m8.500 8.500 4 4" /></svg></TrayIcon>
              <TrayIcon $w={14}><svg width="14" height="14"><rect x="0" y="0" width="14" height="6" rx="3" fill="#eceef4" /><circle cx="10.500" cy="3" r="2" fill="#1f1c58" /><rect x=".6" y="8.100" width="12.800" height="5.300" rx="2.600" fill="none" stroke="#eceef4" strokeWidth="1.200" /><circle cx="10" cy="10.800" r="1.800" fill="#eceef4" /></svg></TrayIcon>
              <TrayIcon $w={14}><svg width="14" height="14"><defs><linearGradient id="siri" x1="0" y1="1" x2="1" y2="0"><stop stopColor="#2ac8f2" /><stop offset=".5" stopColor="#3a2a70" /><stop offset="1" stopColor="#f03a9c" /></linearGradient></defs><circle cx="7" cy="7" r="7" fill="url(#siri)" /><path d="M1 5q3-5 8-4L5 6Z" fill="#f0386c" /><path d="M2 8q4-1 5.500-4.500Q9 7 12.500 7 9 9 10 12 7 9 5 11 5 8 2 8Z" fill="#e8eefa" /></svg></TrayIcon>
            </TrayGroup>
            <Clock>Jeu. 3 juil. à  2:06 PM</Clock>
          </TrayGroup>
        </MenuBar>

        <Window>
          <TitleBar>
            <TitleSide>
              <Lights>
                <Light $dot aria-label="Fermer" /><Light aria-label="Réduire" /><Light aria-label="Agrandir" />
              </Lights>
              <IconButton aria-label="Accueil"><HomeIcon /></IconButton>
              <IconButton aria-label="Enregistrer"><SaveIcon /></IconButton>
              <IconButton aria-label="Enregistrer sous"><SaveAsIcon /></IconButton>
              <IconButton $w={29} aria-label="Annuler"><Row><UndoIcon /><Chevron /></Row></IconButton>
              <IconButton aria-label="Rétablir"><RedoIcon /></IconButton>
              <IconButton aria-label="Plus"><DotsIcon /></IconButton>
            </TitleSide>
            <DocTitle>Classeur13</DocTitle>
            <TitleSide $end>
              <SearchBox><Search size={13} /><input aria-label="Rechercher" placeholder="Rechercher (Cmd + Ctrl + U)" /></SearchBox>
              <IconButton aria-label="Partage"><PeopleIcon /></IconButton>
            </TitleSide>
          </TitleBar>

          <TabRow>
            <Tabs>{ribbonTabs.map((t, i) => <RibbonTab key={t} $on={i === 0}>{t}</RibbonTab>)}</Tabs>
            <ShareButton><ShareIcon />Partager</ShareButton>
          </TabRow>

          <Ribbon>
            <Group $gap={11}>
              <Group $gap={6}>
                <BigTool $start><Row $gap={4}><PasteIcon /><Chevron /></Row>Coller</BigTool>
                <Column $gap={4} $top={4}>
                  <IconButton aria-label="Couper"><CutIcon /></IconButton>
                  <IconButton $w={30} aria-label="Copier"><Row><CopyIcon /><Chevron /></Row></IconButton>
                  <IconButton aria-label="Reproduire la mise en forme"><BrushIcon /></IconButton>
                </Column>
              </Group>
              <Separator />
              <Column $gap={10}>
                <Row $gap={2}>
                  <Combo $w={141}><select aria-label="Police"><option>Calibri (Corps)</option></select><Chevron /></Combo>
                  <Combo $w={54}><select aria-label="Taille"><option>12</option></select><Chevron /></Combo>
                  <Row $gap={6}>
                    <IconButton $w={24} aria-label="Augmenter la taille"><GrowIcon /></IconButton>
                    <IconButton aria-label="Réduire la taille"><GrowIcon down /></IconButton>
                  </Row>
                </Row>
                <Row $gap={6}>
                  <IconButton $w={24} aria-label="Gras"><Letter $bold>G</Letter></IconButton>
                  <IconButton aria-label="Italique"><Letter $italic>I</Letter></IconButton>
                  <IconButton $w={40} aria-label="Souligné"><Row $gap={9}><Letter $line>S</Letter><Chevron /></Row></IconButton>
                  <Separator $h={18} />
                  <IconButton $w={40} aria-label="Bordures"><Row $gap={7}><BordersIcon /><Chevron /></Row></IconButton>
                  <Separator $h={18} />
                  <IconButton $w={38} aria-label="Remplissage"><Row $gap={6}><BucketIcon /><Chevron /></Row></IconButton>
                  <IconButton $w={28} aria-label="Couleur de police"><Row $gap={6}><FontColorIcon /><Chevron /></Row></IconButton>
                </Row>
              </Column>
              <Separator />
            </Group>

            <Group $gap={13}>
              <BigTool><Row $gap={3}><StylesIcon /><Chevron /></Row>{"Styles de\ncellule"}</BigTool>
              <Separator />
              <Column $top={4}>
                <SmallTool><InsertIcon />Insérer<Chevron /></SmallTool>
                <SmallTool><DeleteIcon />Supprimer<Chevron /></SmallTool>
                <SmallTool><FormatIcon />Mise en forme<Chevron /></SmallTool>
              </Column>
              <Separator />
              <Group $gap={6}>
                <Column $top={4}>
                  <SmallTool aria-label="Somme"><SigmaIcon /><Chevron /></SmallTool>
                  <SmallTool aria-label="Recopier"><FillIcon /><Chevron /></SmallTool>
                  <SmallTool aria-label="Effacer"><EraserIcon /><Chevron /></SmallTool>
                </Column>
                <BigTool><Row><SortIcon /><Chevron /></Row>{"Trier et\nfiltrer"}</BigTool>
                <BigTool><Row><FindIcon /><Chevron /></Row>{"Rechercher et\nsélectionner"}</BigTool>
              </Group>
            </Group>
          </Ribbon>

          <FormulaBar>
            <NameBox>
              <input aria-label="Zone de nom" defaultValue="A1" />
              <Column $gap={5}><Triangle dir="up" h={7} /><Triangle dir="down" h={7} /></Column>
            </NameBox>
            <FormulaTools>
              <IconButton aria-label="Annuler la saisie"><svg width="12" height="12" stroke="#5c5c5c" strokeWidth="2.500"><path d="M1.500 1.500 10.500 10.500M10.500 1.500 1.500 10.500" /></svg></IconButton>
              <IconButton aria-label="Valider"><svg width="14" height="12" fill="none" stroke="#5c5c5c" strokeWidth="2.500"><path d="M1 6.500 4.500 10 13 1.500" /></svg></IconButton>
              <Letter $italic $size={18}>fx</Letter>
            </FormulaTools>
            <FormulaInput aria-label="Formule" defaultValue="TEXT" />
            <Expand aria-label="Développer"><Triangle dir="down" fill="#c4c4c4" h={7} /></Expand>
          </FormulaBar>
          <Rule />

          <SheetGrid />

          <SheetTabs>
            <TabArrows><Triangle dir="left" h={10} fill="#6b6b6b" /><Triangle dir="right" h={10} fill="#6b6b6b" /></TabArrows>
            <SheetTab $on>Feuil1</SheetTab>
            <SheetTab>Feuil2</SheetTab>
            <AddTab aria-label="Nouvelle feuille"><svg width="10" height="10" stroke="#c4c4c4" strokeWidth="2"><path d="M5 0v10M0 5h10" /></svg></AddTab>
          </SheetTabs>

          <StatusBar>
            <StatusSide $gap={19}>
              <span>Prêt</span>
              <StatusSide $gap={3}><AccessIcon />Accessibilité : consultez nos recommandations</StatusSide>
            </StatusSide>
            <StatusSide $gap={16}>
              <StatusSide $gap={11}>
                <span>Nb (non vides) : 45</span>
                <StatusSide $gap={8}>
                  <StatusSide>
                    <ViewButton $on aria-label="Normal"><svg width="14" height="14" fill="none" stroke="#f0f0f0"><path d="M.5.5h13v13H.5ZM5 .5v13M9.500.5v13M.5 5h13M.5 9.500h13" /></svg></ViewButton>
                    <ViewButton aria-label="Mise en page"><svg width="14" height="14" fill="none" stroke="#f0f0f0"><path d="M.5.5h13v13H.5ZM3.500 2.500h7v9h-7ZM5 5h4M5 7h4M5 9h4" /></svg></ViewButton>
                    <ViewButton aria-label="Sauts de page"><svg width="14" height="14" fill="none" stroke="#f0f0f0"><path d="M.5.5h13v13H.5ZM5 .5v7M9 .5v7M.5 7.500H9" /></svg></ViewButton>
                  </StatusSide>
                  <StatusSide $gap={6}>
                    <svg width="10" height="4"><rect y="1" width="9" height="2" fill="#f0f0f0" /></svg>
                    <ZoomSlider type="range" aria-label="Zoom" min={0} max={100} defaultValue={50} />
                    <svg width="9" height="9" stroke="#f0f0f0" strokeWidth="2"><path d="M4.500 0v9M0 4.500h9" /></svg>
                  </StatusSide>
                </StatusSide>
              </StatusSide>
              <span>100 %</span>
            </StatusSide>
          </StatusBar>
        </Window>

        <DockWrap>
          <Dock>
            <DockApp $running aria-label="Finder"><Finder /></DockApp>
            <DockApp aria-label="Safari"><Safari /></DockApp>
            <DockApp aria-label="Mail"><Mail /></DockApp>
            <DockApp aria-label="Calendrier"><Calendar /></DockApp>
            <DockApp $running aria-label="Notes"><Notes /></DockApp>
            <DockApp aria-label="App Store"><Store /></DockApp>
            <DockApp aria-label="Préférences"><Settings /></DockApp>
            <DockApp $running aria-label="Code"><Code /></DockApp>
            <DockLine $after={2} />
            <DockApp $running $w={34} aria-label="Transfert"><Transfer /></DockApp>
            <DockApp $running aria-label="Chrome"><Chrome /></DockApp>
            <DockApp $running aria-label="Excel"><Excel /></DockApp>
            <DockLine $after={5} />
            <DockApp $w={28} aria-label="Corbeille"><Trash /></DockApp>
          </Dock>
        </DockWrap>

        <PasteDialog />
      </Desktop>
    </>
  );
}
